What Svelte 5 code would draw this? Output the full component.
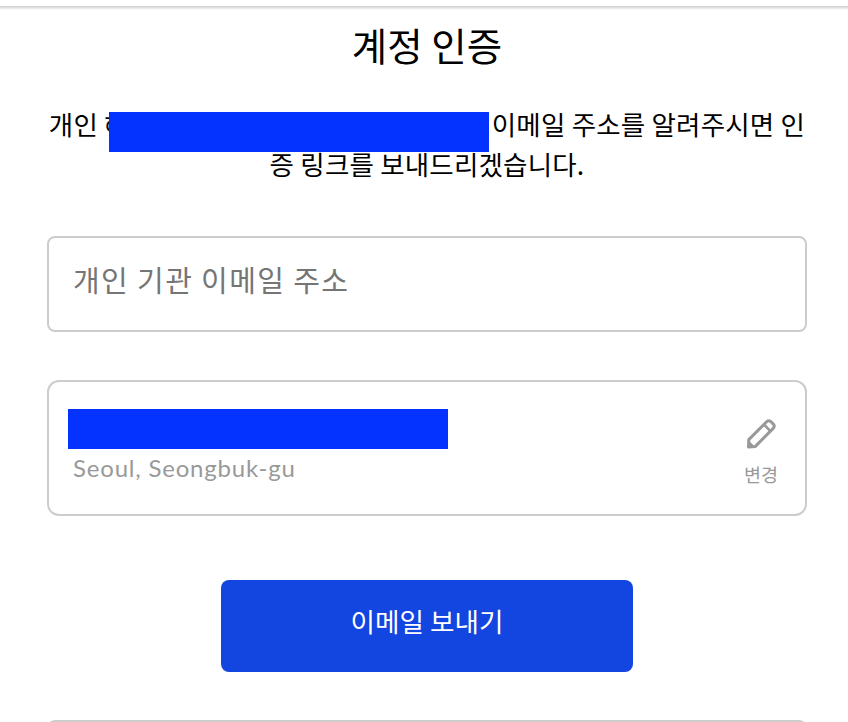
<script>
  const placeholder = '개인 기관 이메일 주소';
</script>

<div class="page">
  <div class="topline"></div>
  <h1>계정 인증</h1>
  <p class="intro">개인 해<span class="redact"></span>이메일 주소를 알려주시면 인증 링크를 보내드리겠습니다.</p>

  <div class="field">
    <input type="text" {placeholder} />
  </div>

  <div class="school">
    <div class="school_info">
      <div class="redact_name"></div>
      <div class="location">Seoul, Seongbuk-gu</div>
    </div>
    <div class="change">
      <svg width="32" height="32" viewBox="0 0 32 32" fill="none">
        <path d="M3.5 29 L3.8 21.6 L21.6 3.8 Q23.6 2 25.6 3.4 L28.6 6.4 Q30 8.4 28.2 10.4 L10.4 28.4 Z" stroke="#999" stroke-width="3" stroke-linejoin="round" />
        <path d="M19.4 7 L25.2 12.8" stroke="#999" stroke-width="2.6" />
        <path d="M3.5 29 L3.8 22.5 L9.8 28.4 Z" fill="#999" />
      </svg>
      <span>변경</span>
    </div>
  </div>

  <button class="send">이메일 보내기</button>

  <div class="next_card"></div>
</div>

<style>
  :global(body) {
    margin: 0;
    background: #fff;
  }

  .page {
    height: 722px;
    overflow: hidden;
    box-sizing: border-box;
    padding: 0 41px 0 47px;
    display: flex;
    flex-direction: column;
    font-family: "Noto Sans CJK KR", "Noto Sans", sans-serif;
    color: #000;
  }

  .topline {
    height: 4px;
    margin: 6px -41px 0 -47px;
    background: linear-gradient(#d4d4d4, #d8d8d8 25%, #f2f2f2 75%, #fff);
    flex-shrink: 0;
  }

  h1 {
    margin: 10px 0 0;
    font-size: 38.5px;
    line-height: 48px;
    font-weight: 400;
    text-align: center;
  }

  .intro {
    margin: 36px 0 0;
    font-size: 26.5px;
    line-height: 40px;
    letter-spacing: 0.2px;
    text-align: center;
    word-break: break-all;
  }

  .redact {
    display: inline-block;
    position: relative;
    top: 8px;
    width: 380px;
    height: 40px;
    background: #0433ff;
    vertical-align: top;
    margin: 0 3px 0 -20px;
  }

  .field {
    margin-top: 52px;
    height: 96px;
    box-sizing: border-box;
    border: 2px solid #ccc;
    border-radius: 8px;
    flex-shrink: 0;
  }

  input {
    width: 100%;
    height: 100%;
    box-sizing: border-box;
    border: 0;
    outline: 0;
    background: none;
    padding: 0 24px 10px;
    font: inherit;
    font-size: 29px;
    letter-spacing: 1.4px;
  }

  input::placeholder {
    color: #757575;
    opacity: 1;
  }

  .school {
    margin-top: 48px;
    height: 136px;
    box-sizing: border-box;
    border: 2px solid #ccc;
    border-radius: 12px;
    display: flex;
    justify-content: space-between;
    padding: 27px 27px 0 24px;
    flex-shrink: 0;
  }

  .school_info {
    position: relative;
  }

  .redact_name {
    width: 380px;
    height: 40px;
    margin-left: -5px;
    background: #0433ff;
  }

  .location {
    font-family: "Lato", sans-serif;
    font-size: 24px;
    line-height: 38px;
    letter-spacing: 0.8px;
    color: #999;
  }

  .change {
    display: flex;
    flex-direction: column;
    align-items: center;
    color: #999;
    font-size: 18.5px;
    line-height: 28px;
    gap: 10px;
    padding-top: 9px;
  }

  .change svg {
    display: block;
  }

  .send {
    align-self: center;
    margin-top: 64px;
    width: 412px;
    height: 92px;
    border: 0;
    border-radius: 8px;
    background: #1345e0;
    color: #fff;
    font: inherit;
    font-size: 26.6px;
    padding-bottom: 12px;
    flex-shrink: 0;
  }

  .next_card {
    margin-top: 48px;
    height: 96px;
    box-sizing: border-box;
    border: 2px solid #ccc;
    border-radius: 8px;
    flex-shrink: 0;
  }
</style>
